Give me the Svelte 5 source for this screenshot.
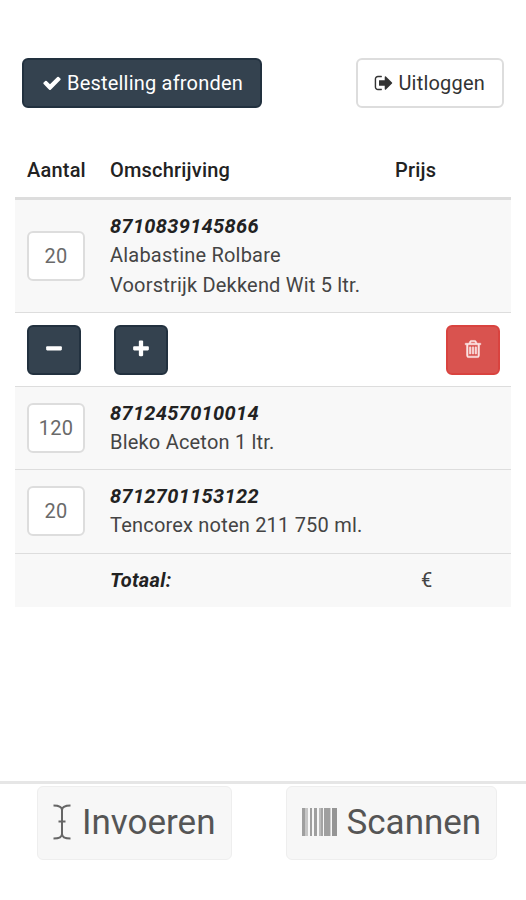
<script>
  let orderLines = [
    { ean: '8710839145866', name: 'Alabastine Rolbare Voorstrijk Dekkend Wit 5 ltr.', amount: 20 },
    { ean: '8712457010014', name: 'Bleko Aceton 1 ltr.', amount: 120 },
    { ean: '8712701153122', name: 'Tencorex noten 211 750 ml.', amount: 20 }
  ];

  // EAN of the line that shows its edit buttons
  let selected = '8710839145866';

  // Barcode bars: x, width, opacity
  const bars = [
    [0, 3, 0.45],
    [3, 3, 0.25],
    [8, 2, 0.45],
    [12, 3, 0.45],
    [17, 2, 0.3],
    [19, 2, 0.42],
    [22, 6, 0.45],
    [28, 1, 0.2],
    [30, 5, 0.5]
  ];

  function change(ean, step) {
    orderLines = orderLines.map((line) =>
      line.ean === ean ? { ...line, amount: Math.max(1, line.amount + step) } : line
    );
  }

  function remove(ean) {
    orderLines = orderLines.filter((line) => line.ean !== ean);
  }
</script>

<div class="page">
  <header>
    <button class="btn btn-primary">
      <svg class="icon" viewBox="0 0 1792 1792"><path d="M1671 566q0 40-28 68l-724 724-136 136q-28 28-68 28t-68-28l-136-136-362-362q-28-28-28-68t28-68l136-136q28-28 68-28t68 28l294 295 656-657q28-28 68-28t68 28l136 136q28 28 28 68z" /></svg>
      <span>Bestelling afronden</span>
    </button>
    <button class="btn btn-default">
      <svg class="icon" viewBox="0 0 1792 1792"><path d="M704 1440q0 4 1 20t.5 26.5-3 23.5-10 19.5-20.5 6.5h-320q-119 0-203.5-84.5t-84.5-203.5v-704q0-119 84.5-203.5t203.5-84.5h320q13 0 22.5 9.5t9.5 22.5q0 4 1 20t.5 26.5-3 23.5-10 19.5-20.5 6.5h-320q-66 0-113 47t-47 113v704q0 66 47 113t113 47h312l11.5 1 11.5 3 8 5.5 7 9 2 13.5zm928-544q0 26-19 45l-544 544q-19 19-45 19t-45-19-19-45v-288h-448q-26 0-45-19t-19-45v-384q0-26 19-45t45-19h448v-288q0-26 19-45t45-19 45 19l544 544q19 19 19 45z" /></svg>
      <span>Uitloggen</span>
    </button>
  </header>

  <table>
    <thead>
      <tr>
        <th class="col-amount">Aantal</th>
        <th class="col-name">Omschrijving</th>
        <th class="col-price">Prijs</th>
      </tr>
    </thead>
    <tbody>
      {#each orderLines as line (line.ean)}
        <tr class="line" on:click={() => (selected = line.ean)}>
          <td><input type="text" bind:value={line.amount} /></td>
          <td>
            <strong>{line.ean}</strong><br />
            {line.name}
          </td>
          <td></td>
        </tr>
        {#if selected === line.ean}
          <tr>
            <td colspan="3" class="action-cell">
              <div class="actions">
                <button class="btn btn-primary square" aria-label="Minder" on:click={() => change(line.ean, -1)}>
                  <svg class="icon" viewBox="0 0 1792 1792"><path d="M1600 736v192q0 40-28 68t-68 28h-1216q-40 0-68-28t-28-68v-192q0-40 28-68t68-28h1216q40 0 68 28t28 68z" /></svg>
                </button>
                <button class="btn btn-primary square" aria-label="Meer" on:click={() => change(line.ean, 1)}>
                  <svg class="icon" viewBox="0 0 1792 1792"><path d="M1600 736v192q0 40-28 68t-68 28h-416v416q0 40-28 68t-68 28h-192q-40 0-68-28t-28-68v-416h-416q-40 0-68-28t-28-68v-192q0-40 28-68t68-28h416v-416q0-40 28-68t68-28h192q40 0 68 28t28 68v416h416q40 0 68 28t28 68z" /></svg>
                </button>
                <button class="btn btn-danger square" aria-label="Verwijderen" on:click={() => remove(line.ean)}>
                  <svg class="icon" viewBox="0 0 1792 1792"><path d="M704 736v576q0 14-9 23t-23 9h-64q-14 0-23-9t-9-23v-576q0-14 9-23t23-9h64q14 0 23 9t9 23zm256 0v576q0 14-9 23t-23 9h-64q-14 0-23-9t-9-23v-576q0-14 9-23t23-9h64q14 0 23 9t9 23zm256 0v576q0 14-9 23t-23 9h-64q-14 0-23-9t-9-23v-576q0-14 9-23t23-9h64q14 0 23 9t9 23zm128 724v-948h-896v948q0 22 7 40.5t14.5 27 10.5 8.5h832q3 0 10.5-8.5t14.5-27 7-40.5zm-672-1076h448l-48-117q-7-9-17-11h-317q-10 2-17 11zm928 32v64q0 14-9 23t-23 9h-96v948q0 83-47 143.5t-113 60.5h-832q-66 0-113-58.5t-47-141.5v-952h-96q-14 0-23-9t-9-23v-64q0-14 9-23t23-9h309l70-167q15-37 54-63t79-26h320q40 0 79 26t54 63l70 167h309q14 0 23 9t9 23z" /></svg>
                </button>
              </div>
            </td>
          </tr>
        {/if}
      {/each}
      <tr class="line">
        <td></td>
        <td><strong>Totaal:</strong></td>
        <td class="total">€</td>
      </tr>
    </tbody>
  </table>

  <footer>
    <button class="btn-large">
      <svg class="cursor" viewBox="0 0 18 36"><path d="M0.5 1.5Q9 1.5 9 6Q9 1.5 17.5 1.5M9 5V31M0.5 34.5Q9 34.5 9 30Q9 34.5 17.5 34.5M5.5 17.5H12.5" /></svg>
      <span>Invoeren</span>
    </button>
    <button class="btn-large">
      <svg class="barcode" viewBox="0 0 36 28">
        {#each bars as [x, width, opacity]}
          <rect {x} y="0" {width} height="28" {opacity} />
        {/each}
      </svg>
      <span>Scannen</span>
    </button>
  </footer>
</div>

<style>
  :global(body) {
    background: #fff;
  }

  .page {
    box-sizing: border-box;
    height: 900px;
    padding-top: 58px;
    display: flex;
    flex-direction: column;
    font-family: Roboto, sans-serif;
    font-size: 20px;
    line-height: 29.2px;
    letter-spacing: 0.2px;
    color: #444;
  }

  header {
    display: flex;
    justify-content: space-between;
    padding: 0 22px;
    margin-bottom: 36px;
  }

  button {
    box-sizing: border-box;
    font: inherit;
    letter-spacing: inherit;
    cursor: pointer;
  }

  .btn {
    display: flex;
    align-items: center;
    gap: 5px;
    height: 50px;
    padding: 1px 17px 0 18px;
    border: 2px solid #ddd;
    border-radius: 6px;
  }

  .icon {
    width: 20px;
    height: 20px;
    margin-top: -2px;
    fill: currentColor;
    flex: none;
  }

  .btn-primary {
    background: #34424f;
    border-color: #22313f;
    color: #fff;
  }

  .btn-default {
    padding: 1px 17px 0 16px;
    gap: 4px;
    background: #fff;
    color: #333;
  }

  .btn-danger {
    background: #d9534f;
    border-color: #d9433f;
    color: #fbe4e3;
  }

  .btn-danger .icon {
    stroke: currentColor;
    stroke-width: 50;
  }

  .square {
    width: 54px;
    padding: 0;
    justify-content: center;
  }

  table {
    width: 496px;
    margin-left: 15px;
    table-layout: fixed;
    border-collapse: collapse;
  }

  .col-amount {
    width: 83px;
  }

  .col-name {
    width: 284px;
  }

  th,
  td {
    box-sizing: border-box;
    padding: 12px;
    text-align: left;
    vertical-align: middle;
  }

  th {
    font-weight: 500;
    padding-bottom: 12px;
    border-bottom: 3px solid #ddd;
    color: #222;
  }

  .col-price {
    padding-left: 13px;
  }

  td {
    border-top: 1px solid #ddd;
  }

  .line {
    background: #f8f8f8;
  }

  strong {
    font-weight: 700;
    font-style: italic;
    letter-spacing: 0.32px;
    color: #222;
  }

  input {
    display: block;
    box-sizing: border-box;
    width: 58px;
    height: 50px;
    padding: 0 0 1px;
    border: 2px solid #ddd;
    border-radius: 6px;
    background: #fff;
    font: inherit;
    letter-spacing: inherit;
    color: #6a6a6a;
    text-align: center;
  }

  .action-cell {
    padding-right: 11px;
    padding-bottom: 11px;
  }

  .actions {
    display: flex;
    gap: 33px;
  }

  .actions .btn-danger {
    margin-left: auto;
  }

  .total {
    padding-left: 39px;
  }

  footer {
    display: flex;
    align-items: flex-start;
    gap: 54px;
    box-sizing: border-box;
    height: 119px;
    margin-top: auto;
    padding: 2px 30px 0 37px;
    border-top: 3px solid #e6e6e6;
  }

  .btn-large {
    display: flex;
    align-items: center;
    height: 74px;
    padding: 0 15px 0 15px;
    border: 1px solid #eee;
    border-radius: 6px;
    background: #f7f7f7;
    font-size: 35px;
    letter-spacing: 0;
    color: #555;
  }

  .cursor {
    width: 18px;
    height: 36px;
    margin-top: -2px;
    margin-right: 11px;
    fill: none;
    stroke: #666;
    stroke-width: 2;
  }

  .barcode {
    width: 36px;
    height: 28px;
    margin-top: -3px;
    margin-right: 9px;
    fill: #333;
  }
</style>
